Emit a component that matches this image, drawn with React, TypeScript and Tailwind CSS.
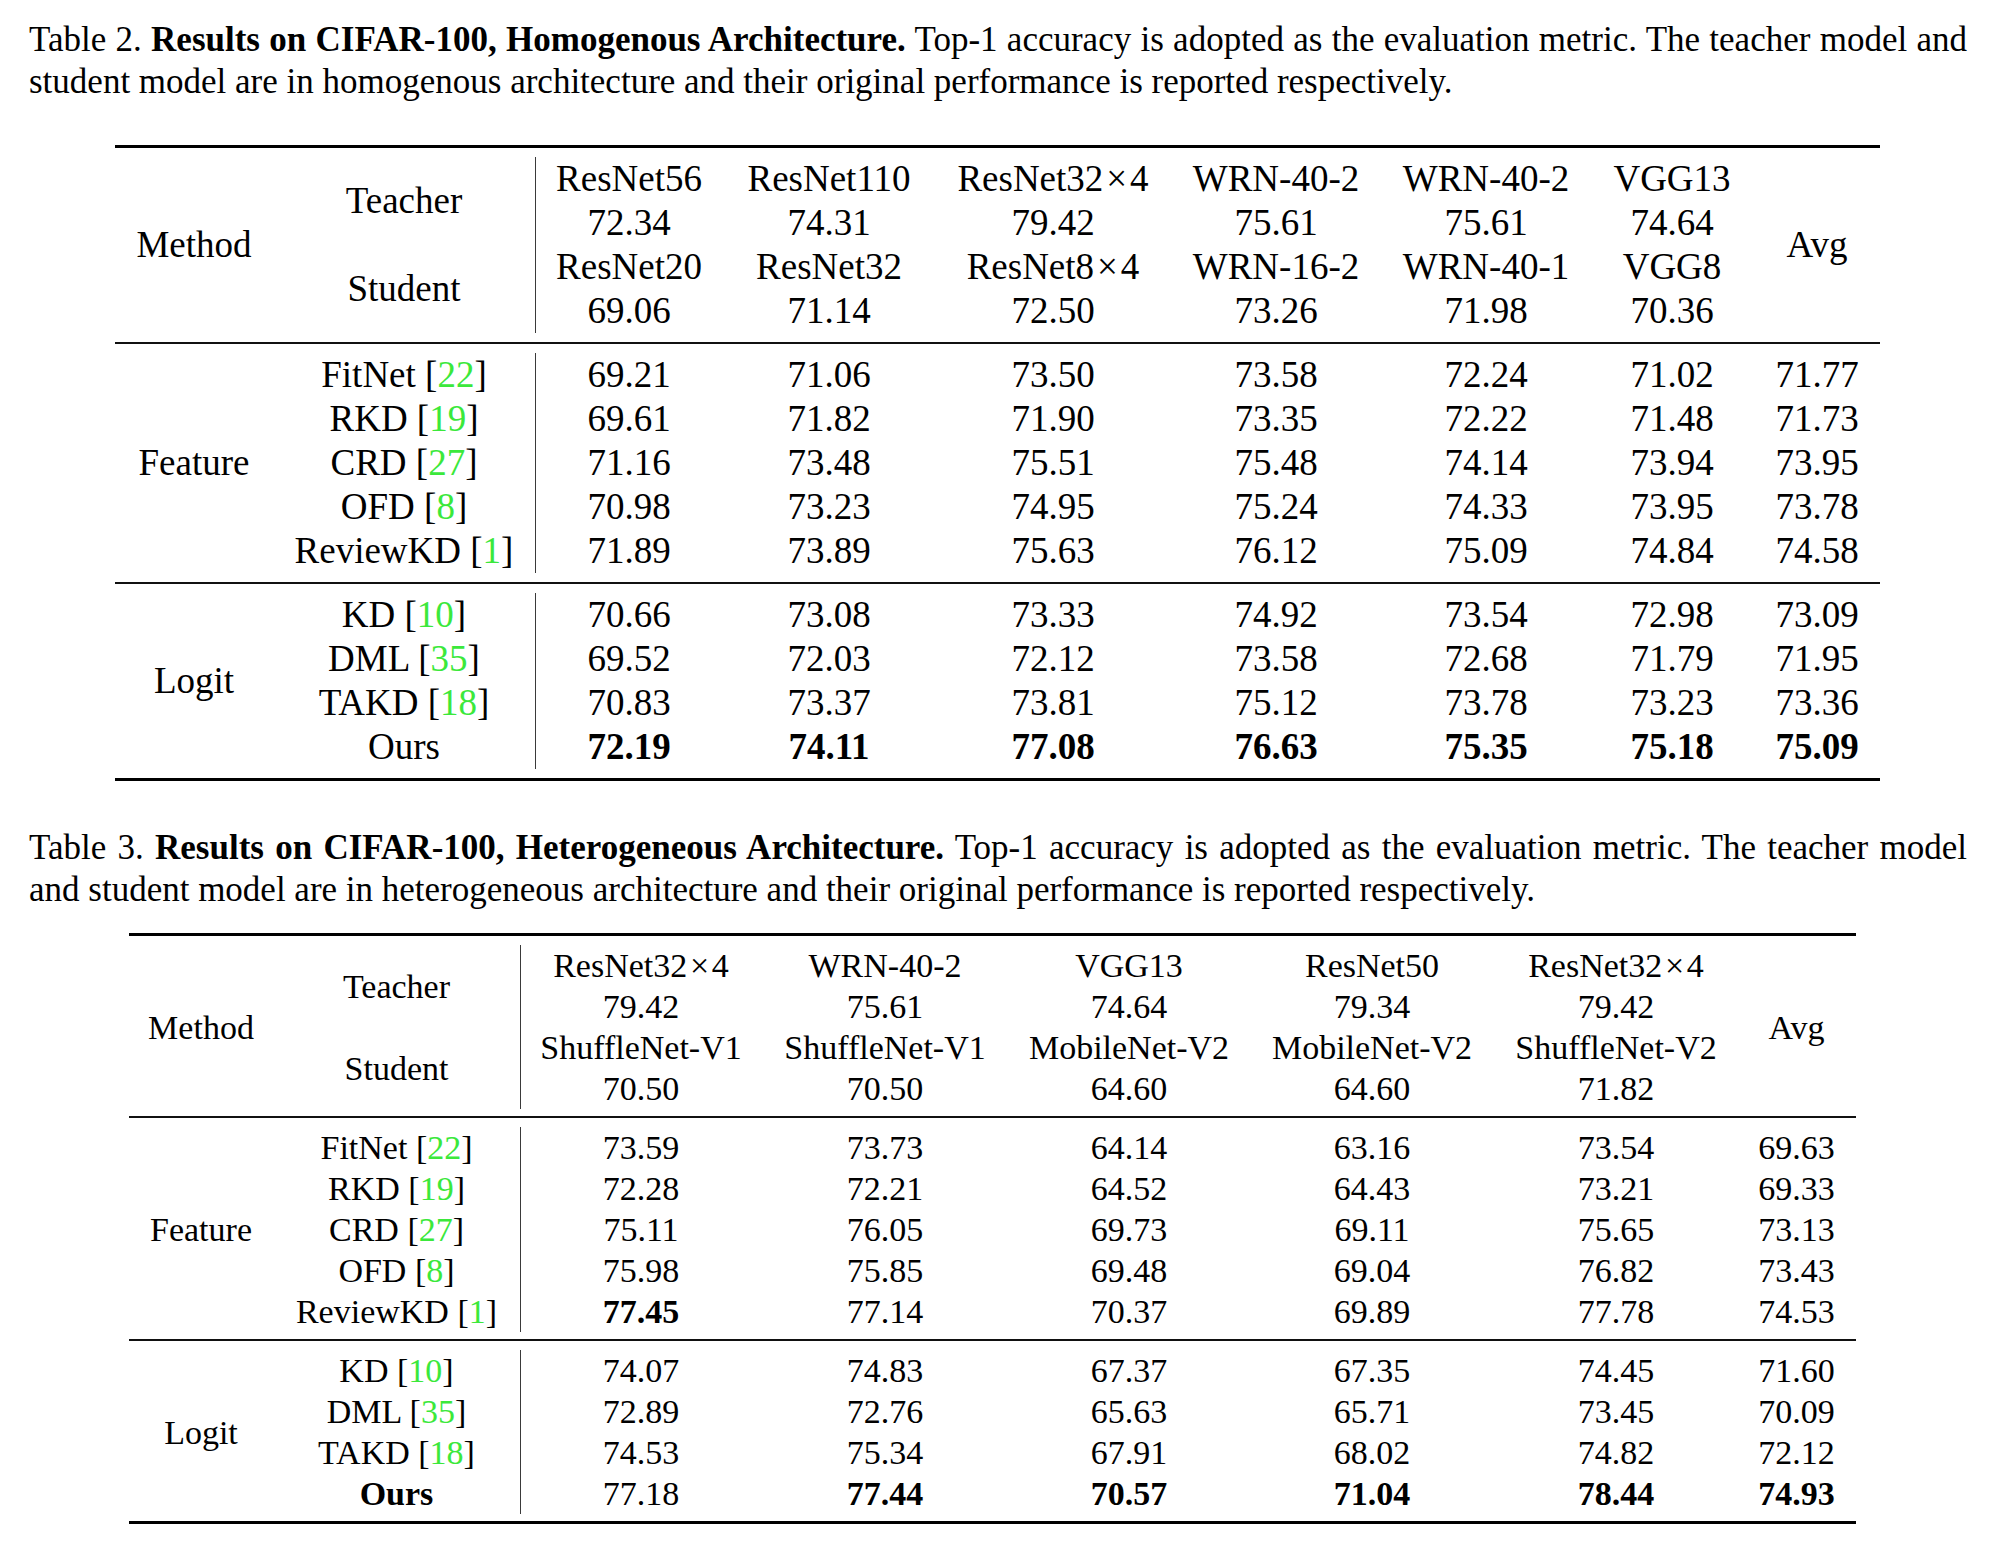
import React from "react";

type Row = { n: string; c?: string; v: string[]; bn?: boolean };

const cite = "text-[#3be83b]";

const t2Head = [
  ["ResNet56", "72.34", "ResNet20", "69.06"],
  ["ResNet110", "74.31", "ResNet32", "71.14"],
  ["ResNet32×4", "79.42", "ResNet8×4", "72.50"],
  ["WRN-40-2", "75.61", "WRN-16-2", "73.26"],
  ["WRN-40-2", "75.61", "WRN-40-1", "71.98"],
  ["VGG13", "74.64", "VGG8", "70.36"],
];

const t2Feature: Row[] = [
  { n: "FitNet", c: "22", v: ["69.21", "71.06", "73.50", "73.58", "72.24", "71.02", "71.77"] },
  { n: "RKD", c: "19", v: ["69.61", "71.82", "71.90", "73.35", "72.22", "71.48", "71.73"] },
  { n: "CRD", c: "27", v: ["71.16", "73.48", "75.51", "75.48", "74.14", "73.94", "73.95"] },
  { n: "OFD", c: "8", v: ["70.98", "73.23", "74.95", "75.24", "74.33", "73.95", "73.78"] },
  { n: "ReviewKD", c: "1", v: ["71.89", "73.89", "75.63", "76.12", "75.09", "74.84", "74.58"] },
];

const t2Logit: Row[] = [
  { n: "KD", c: "10", v: ["70.66", "73.08", "73.33", "74.92", "73.54", "72.98", "73.09"] },
  { n: "DML", c: "35", v: ["69.52", "72.03", "72.12", "73.58", "72.68", "71.79", "71.95"] },
  { n: "TAKD", c: "18", v: ["70.83", "73.37", "73.81", "75.12", "73.78", "73.23", "73.36"] },
  { n: "Ours", v: ["*72.19", "*74.11", "*77.08", "*76.63", "*75.35", "*75.18", "*75.09"] },
];

const t3Head = [
  ["ResNet32×4", "79.42", "ShuffleNet-V1", "70.50"],
  ["WRN-40-2", "75.61", "ShuffleNet-V1", "70.50"],
  ["VGG13", "74.64", "MobileNet-V2", "64.60"],
  ["ResNet50", "79.34", "MobileNet-V2", "64.60"],
  ["ResNet32×4", "79.42", "ShuffleNet-V2", "71.82"],
];

const t3Feature: Row[] = [
  { n: "FitNet", c: "22", v: ["73.59", "73.73", "64.14", "63.16", "73.54", "69.63"] },
  { n: "RKD", c: "19", v: ["72.28", "72.21", "64.52", "64.43", "73.21", "69.33"] },
  { n: "CRD", c: "27", v: ["75.11", "76.05", "69.73", "69.11", "75.65", "73.13"] },
  { n: "OFD", c: "8", v: ["75.98", "75.85", "69.48", "69.04", "76.82", "73.43"] },
  { n: "ReviewKD", c: "1", v: ["*77.45", "77.14", "70.37", "69.89", "77.78", "74.53"] },
];

const t3Logit: Row[] = [
  { n: "KD", c: "10", v: ["74.07", "74.83", "67.37", "67.35", "74.45", "71.60"] },
  { n: "DML", c: "35", v: ["72.89", "72.76", "65.63", "65.71", "73.45", "70.09"] },
  { n: "TAKD", c: "18", v: ["74.53", "75.34", "67.91", "68.02", "74.82", "72.12"] },
  { n: "Ours", bn: true, v: ["77.18", "*77.44", "*70.57", "*71.04", "*78.44", "*74.93"] },
];

// multiplication sign with a touch of math spacing
const Name = ({ s }: { s: string }) => {
  if (!s.includes("×")) return <>{s}</>;
  const [a, b] = s.split("×");
  return (
    <>
      {a}
      <span className="px-[0.08em]">×</span>
      {b}
    </>
  );
};

const Val = ({ s }: { s: string }) =>
  s.startsWith("*") ? <span className="font-bold">{s.slice(1)}</span> : <>{s}</>;

type TableProps = {
  w: string[];
  rowH: string;
  padT: string;
  padB: string;
  head: string[][];
  feature: Row[];
  logit: Row[];
};

const Rule = ({ thick }: { thick?: boolean }) => (
  <div className={thick ? "h-[3px] bg-black" : "h-[2px] bg-[#111]"} />
);

const Block = ({
  w,
  rowH,
  padT,
  padB,
  label,
  rows,
}: {
  w: string[];
  rowH: string;
  padT: string;
  padB: string;
  label: string;
  rows: Row[];
}) => (
  <div className={`flex ${padT} ${padB}`}>
    <div className={`${w[0]} flex items-center justify-center`}>{label}</div>
    <div className={`${w[1]} flex flex-col border-r border-[#3a3a3a]`}>
      {rows.map((r) => (
        <div key={r.n} className={`${rowH} text-center whitespace-nowrap ${r.bn ? "font-bold" : ""}`}>
          {r.n}
          {r.c && (
            <>
              {" "}[<span className={cite}>{r.c}</span>]
            </>
          )}
        </div>
      ))}
    </div>
    {rows[0].v.map((_, ci) => (
      <div key={ci} className={`${w[ci + 2]} flex flex-col`}>
        {rows.map((r) => (
          <div key={r.n} className={`${rowH} text-center whitespace-nowrap`}>
            <Val s={r.v[ci]} />
          </div>
        ))}
      </div>
    ))}
  </div>
);

const Table = ({ w, rowH, padT, padB, head, feature, logit }: TableProps) => (
  <div>
    <Rule thick />
    <div className={`flex ${padT} ${padB}`}>
      <div className={`${w[0]} flex items-center justify-center`}>Method</div>
      <div className={`${w[1]} flex flex-col border-r border-[#3a3a3a]`}>
        <div className="flex-1 flex items-center justify-center">Teacher</div>
        <div className="flex-1 flex items-center justify-center">Student</div>
      </div>
      {head.map((col, ci) => (
        <div key={ci} className={`${w[ci + 2]} flex flex-col`}>
          {col.map((s, i) => (
            <div key={i} className={`${rowH} text-center whitespace-nowrap`}>
              <Name s={s} />
            </div>
          ))}
        </div>
      ))}
      <div className={`${w[head.length + 2]} flex items-center justify-center`}>Avg</div>
    </div>
    <Rule />
    <Block w={w} rowH={rowH} padT={padT} padB={padB} label="Feature" rows={feature} />
    <Rule />
    <Block w={w} rowH={rowH} padT={padT} padB={padB} label="Logit" rows={logit} />
    <Rule thick />
  </div>
);

const t2w = [
  "w-[158px]",
  "w-[263px]",
  "w-[186px]",
  "w-[214px]",
  "w-[234px]",
  "w-[212px]",
  "w-[208px]",
  "w-[164px]",
  "w-[126px]",
];

const t3w = [
  "w-[144px]",
  "w-[248px]",
  "w-[240px]",
  "w-[248px]",
  "w-[240px]",
  "w-[246px]",
  "w-[242px]",
  "w-[119px]",
];

const App: React.FC = () => {
  return (
    <div className="w-[2006px] h-[1548px] bg-white text-black font-['Liberation_Serif','Times_New_Roman',serif] overflow-hidden">
      <div className="ml-[29px] w-[1938px] pt-[19px] text-[35px] leading-[42px]">
        <p className="text-justify [text-align-last:justify] whitespace-nowrap">
          Table 2. <b>Results on CIFAR-100, Homogenous Architecture.</b> Top-1 accuracy is adopted as
          the evaluation metric. The teacher model and
        </p>
        <p>
          student model are in homogenous architecture and their original performance is reported
          respectively.
        </p>
      </div>

      <div className="ml-[115px] w-[1765px] mt-[42px] text-[37px]">
        <Table
          w={t2w}
          rowH="h-[44px] leading-[44px]"
          padT="pt-[9px]"
          padB="pb-[9px]"
          head={t2Head}
          feature={t2Feature}
          logit={t2Logit}
        />
      </div>

      <div className="ml-[29px] w-[1938px] mt-[46px] text-[35px] leading-[42px]">
        <p className="text-justify [text-align-last:justify] whitespace-nowrap">
          Table 3. <b>Results on CIFAR-100, Heterogeneous Architecture.</b> Top-1 accuracy is adopted as
          the evaluation metric. The teacher model
        </p>
        <p>
          and student model are in heterogeneous architecture and their original performance is
          reported respectively.
        </p>
      </div>

      <div className="ml-[129px] w-[1727px] mt-[22px] text-[34px]">
        <Table
          w={t3w}
          rowH="h-[41px] leading-[41px]"
          padT="pt-[9px]"
          padB="pb-[7px]"
          head={t3Head}
          feature={t3Feature}
          logit={t3Logit}
        />
      </div>
    </div>
  );
};

export default App;
